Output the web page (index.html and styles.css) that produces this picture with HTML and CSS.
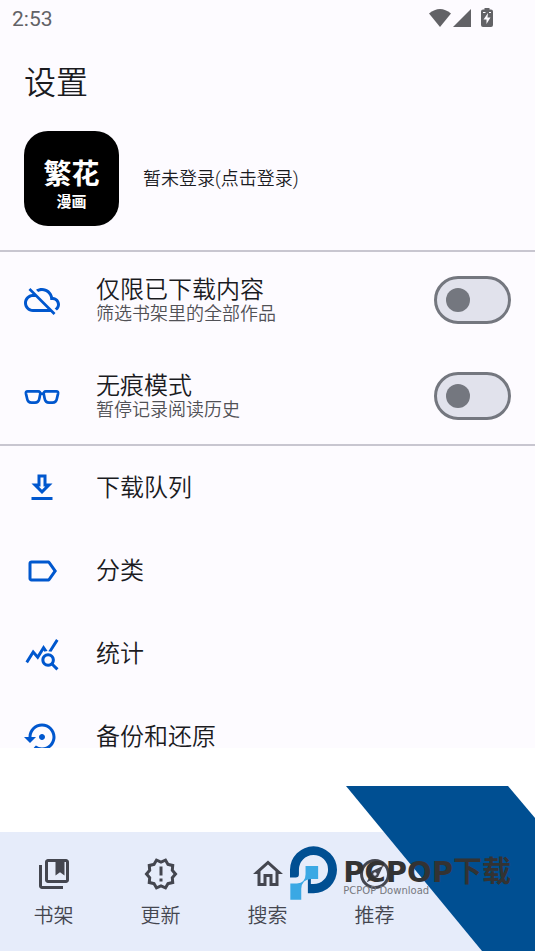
FILE: index.html
```html
<!DOCTYPE html>
<html lang="zh-CN">
<head>
  <meta charset="UTF-8">
  <meta name="viewport" content="width=device-width, initial-scale=1.0">
  <title>设置</title>
  <link rel="stylesheet" href="styles.css">
</head>
<body>
  <!-- Scrolling content -->
  <main class="content">
    <div class="status-bar">
      <span class="clock">2:53</span>
      <svg class="status-icons" width="68" height="22" viewBox="0 0 68 22">
        <path d="M0 5.500Q11 -3.500 22 5.500L11 19z"/>
        <path d="M42 1v18H24z"/>
        <path fill-rule="evenodd" d="M55.500 0h5v1.500H62q2 0 2 2v13.500q0 2-2 2h-8q-2 0-2-2V3.500q0-2 2-2h1.500zM59 5l-4.500 6.500h3V16l4-6.500h-3zM54 4v1h2.500V4zM60 4v1h2V4z"/>
      </svg>
    </div>

    <h1>设置</h1>

    <a class="account" href="#login">
      <span class="avatar">
        <span class="avatar-name">繁花</span>
        <span class="avatar-type">漫画</span>
      </span>
      <span class="account-text">暂未登录(点击登录)</span>
    </a>

    <!-- Switches -->
    <section class="switches">
      <div class="switch-row">
        <svg class="icon" viewBox="0 0 24 24"><path d="M19.350 10.040C18.670 6.590 15.640 4 12 4c-1.480 0-2.850.43-4.010 1.170l1.460 1.460C10.210 6.230 11.080 6 12 6c3.040 0 5.500 2.460 5.500 5.500v.5H19c1.660 0 3 1.340 3 3 0 1.130-.64 2.110-1.560 2.620l1.450 1.450C23.160 18.160 24 16.680 24 15c0-2.640-2.050-4.780-4.650-4.960zM3 5.270l2.750 2.740C2.560 8.150 0 10.770 0 14c0 3.310 2.690 6 6 6h11.730l2 2L21 20.730 4.270 4 3 5.270zM7.730 10l8 8H6c-2.210 0-4-1.790-4-4s1.790-4 4-4h1.730z"/></svg>
        <label class="switch-text" for="downloadedOnly">
          <span class="title">仅限已下载内容</span>
          <span class="subtitle">筛选书架里的全部作品</span>
        </label>
        <input class="switch" type="checkbox" id="downloadedOnly">
      </div>
      <div class="switch-row">
        <svg class="icon" viewBox="0 0 24 24">
          <g fill="none" stroke="#0057ce" stroke-width="1.8">
            <path d="M2.500 8.900h6.900c1.200 0 1.600.8 1.400 1.900l-.6 3c-.3 1.700-1.200 2.600-2.900 2.600H5c-1.800 0-2.600-.9-2.900-2.600L1.300 10.400c-.2-1 .2-1.500 1.200-1.500z"/>
            <path d="M21.500 8.900h-6.900c-1.200 0-1.600.8-1.400 1.900l.6 3c.3 1.700 1.200 2.600 2.900 2.600H19c1.800 0 2.600-.9 2.900-2.600l.8-3.400c.2-1-.2-1.500-1.200-1.500z"/>
            <path d="M10.500 10.500h3"/>
          </g>
        </svg>
        <label class="switch-text" for="incognito">
          <span class="title">无痕模式</span>
          <span class="subtitle">暂停记录阅读历史</span>
        </label>
        <input class="switch" type="checkbox" id="incognito">
      </div>
    </section>

    <!-- Menu -->
    <div class="menu">
      <a class="menu-item" href="#queue">
        <svg class="icon" viewBox="0 0 24 24"><path d="M19 9h-4V3H9v6H5l7 7 7-7zm-8 2V5h2v6h1.170L12 13.170 9.830 11H11zm-6 7h14v2H5z"/></svg>
        <span class="title">下载队列</span>
      </a>
      <a class="menu-item" href="#categories">
        <svg class="icon" viewBox="0 0 24 24"><path d="M17.630 5.840C17.270 5.330 16.670 5 16 5L5 5.010C3.900 5.010 3 5.900 3 7v10c0 1.100.9 1.990 2 1.990L16 19c.67 0 1.270-.33 1.630-.84L22 12l-4.370-6.160zM16 17H5V7h11l3.550 5L16 17z"/></svg>
        <span class="title">分类</span>
      </a>
      <a class="menu-item" href="#stats">
        <svg class="icon" viewBox="0 0 24 24"><path d="M19.880 18.470c.44-.7.7-1.510.7-2.390 0-2.490-2.010-4.500-4.500-4.500s-4.500 2.010-4.500 4.500 2.010 4.500 4.490 4.500c.88 0 1.700-.26 2.390-.7L21.580 23 23 21.580l-3.120-3.110zm-3.800.11c-1.380 0-2.500-1.120-2.500-2.500s1.120-2.500 2.500-2.500 2.500 1.120 2.500 2.500-1.120 2.500-2.500 2.500zm-.36-8.500c-.74.02-1.450.18-2.100.45l-.55-.83-3.800 6.180-3.010-3.520-3.630 5.810L1 17l5-8 3 3.500L13 6l2.720 4.080zm2.590.5c-.64-.28-1.330-.45-2.050-.49L21.380 2 23 3.180l-4.690 7.400z"/></svg>
        <span class="title">统计</span>
      </a>
      <a class="menu-item" href="#backup">
        <svg class="icon" viewBox="0 0 24 24"><path d="M14 12c0-1.100-.9-2-2-2s-2 .9-2 2 .9 2 2 2 2-.9 2-2zm-2-9c-4.970 0-9 4.030-9 9H0l4 4 4-4H5c0-3.870 3.130-7 7-7s7 3.130 7 7-3.130 7-7 7c-1.510 0-2.910-.49-4.060-1.300l-1.420 1.440C8.040 20.300 9.940 21 12 21c4.970 0 9-4.030 9-9s-4.030-9-9-9z"/></svg>
        <span class="title">备份和还原</span>
      </a>
    </div>
  </main>

  <!-- Bottom navigation -->
  <nav class="bottom-nav">
    <a class="nav-item" href="#library">
      <svg class="icon" viewBox="0 0 24 24"><path d="M4 6H2v14c0 1.100.9 2 2 2h14v-2H4zM20 2H8c-1.100 0-2 .9-2 2v12c0 1.100.9 2 2 2h12c1.100 0 2-.9 2-2V4c0-1.100-.9-2-2-2zm0 14H8V4h5v9l3-2.200 3 2.200V4h1z"/></svg>
      <span>书架</span>
    </a>
    <a class="nav-item" href="#updates">
      <svg class="icon" viewBox="0 0 24 24"><path d="M23 12l-2.440-2.780.34-3.680-3.610-.82-1.890-3.180L12 3 8.600 1.540 6.710 4.720l-3.610.81.34 3.680L1 12l2.440 2.780-.34 3.690 3.610.82 1.890 3.180L12 21l3.400 1.460 1.890-3.180 3.610-.82-.34-3.680L23 12zm-4.510 2.110.26 2.790-2.740.62-1.430 2.410L12 18.820l-2.580 1.110-1.430-2.410-2.740-.62.26-2.800L3.660 12l1.850-2.120-.26-2.780 2.740-.61 1.430-2.410L12 5.180l2.580-1.110 1.430 2.410 2.740.62-.26 2.790L20.340 12l-1.850 2.110zM11 15h2v2h-2zm0-8h2v6h-2z"/></svg>
      <span>更新</span>
    </a>
    <a class="nav-item" href="#search">
      <svg class="icon" viewBox="0 0 24 24"><path d="M12 5.690l5 4.500V18h-2v-6H9v6H7v-7.810l5-4.500M12 3L2 12h3v8h6v-6h2v6h6v-8h3L12 3z"/></svg>
      <span>搜索</span>
    </a>
    <a class="nav-item" href="#discover">
      <svg class="icon" viewBox="0 0 24 24"><path d="M12 2C6.480 2 2 6.480 2 12s4.480 10 10 10 10-4.480 10-10S17.520 2 12 2zm0 18c-4.410 0-8-3.590-8-8s3.590-8 8-8 8 3.590 8 8-3.590 8-8 8zm-5.500-2.500l7.510-3.490L17.500 6.500 9.990 9.990 6.500 17.500zm5.500-6.600c.61 0 1.100.49 1.100 1.100s-.49 1.100-1.100 1.100-1.100-.49-1.100-1.100.49-1.100 1.100-1.100z"/></svg>
      <span>推荐</span>
    </a>
  </nav>

  <!-- Corner ribbon and site mark -->
  <div class="ribbon"></div>
  <div class="site-mark">
    <svg width="47" height="54" viewBox="0 0 142 161">
      <path fill="#004f92" d="M0 94V71A71 71 0 1 1 71 142H54V99h9V114h8A44 44 0 1 0 27 71V84Q27 94 17 94z"/>
      <path fill="#3aa8e4" d="M47 59h38v40H64Q36 100 34 128V161H1V112h20Q47 110 47 84z"/>
    </svg>
    <div class="site-text">
      <div class="site-name">PCPOP下载</div>
      <div class="site-sub">PCPOP Download</div>
    </div>
  </div>
</body>
</html>
```

FILE: styles.css
```css
* {
  box-sizing: border-box;
}

body {
  margin: 0;
  height: 100vh;
  display: flex;
  flex-direction: column;
  gap: 84px;
  position: relative;
  overflow: hidden;
  background: #fff;
  color: #1b1b1f;
  font-family: Roboto, 'Noto Sans CJK SC', sans-serif;
  font-weight: 350;
}

a {
  color: inherit;
  text-decoration: none;
}

.content {
  flex: 1;
  min-height: 0;
  overflow: hidden;
  background: #fdfbff;
}

/* Status bar */
.status-bar {
  display: flex;
  justify-content: space-between;
  align-items: center;
  height: 38px;
  padding: 0 38px 0 12px;
  color: #626266;
}

.clock {
  font-size: 21px;
  font-weight: 400;
}

.status-icons {
  fill: #626266;
}

h1 {
  margin: 0;
  padding: 21px 24px 24px;
  font-size: 32px;
  line-height: 48px;
  font-weight: 350;
}

/* Account */
.account {
  display: flex;
  align-items: center;
  gap: 24px;
  padding: 0 24px 24px;
  border-bottom: 2px solid #c8c6d0;
}

.avatar {
  display: flex;
  flex-direction: column;
  align-items: center;
  justify-content: center;
  width: 95px;
  height: 95px;
  padding-top: 16px;
  border-radius: 24px;
  background: #000;
  color: #fff;
  font-weight: 700;
}

.avatar-name {
  font-size: 28px;
  line-height: 30px;
}

.avatar-type {
  font-size: 15px;
  line-height: 24px;
}

.account-text {
  font-size: 18px;
  line-height: 24px;
}

/* Rows */
.icon {
  flex: none;
  width: 36px;
  height: 36px;
  fill: #0057ce;
}

.switches {
  border-bottom: 2px solid #c8c6d0;
}

.switch-row,
.menu-item {
  display: flex;
  align-items: center;
  gap: 36px;
  height: 96px;
  padding: 0 24px;
}

.menu-item {
  height: 83px;
}

.switch-text {
  flex: 1;
  display: flex;
  flex-direction: column;
  padding-top: 4px;
}

.title {
  font-size: 24px;
  line-height: 24px;
}

.subtitle {
  font-size: 18px;
  line-height: 24px;
  color: #515156;
}

.switch {
  appearance: none;
  display: flex;
  align-items: center;
  width: 77px;
  height: 48px;
  margin: 0;
  padding: 0 9px;
  border: 3px solid #74777f;
  border-radius: 24px;
  background: #e1e2ec;
}

.switch::before {
  content: '';
  width: 24px;
  height: 24px;
  border-radius: 50%;
  background: #74777f;
}

.switch:checked {
  justify-content: flex-end;
}

/* Bottom navigation */
.bottom-nav {
  display: grid;
  grid-template-columns: repeat(5, 1fr);
  height: 119px;
  padding-top: 24px;
  background: #e6ecfa;
  color: #44464f;
}

.nav-item {
  display: flex;
  flex-direction: column;
  align-items: center;
  gap: 8px;
  font-size: 20px;
  line-height: 32px;
}

.nav-item .icon {
  fill: #44464f;
}

/* Ribbon and mark lie over the navigation */
.ribbon {
  position: absolute;
  right: 0;
  bottom: 0;
  width: 189px;
  height: 165px;
  background: #004f92;
  clip-path: polygon(0 0, 162px 0, 100% 32px, 100% 100%, 136px 100%);
}

.site-mark {
  position: absolute;
  right: 24px;
  bottom: 51px;
  display: flex;
  align-items: flex-end;
  gap: 6px;
  color: #333;
  pointer-events: none;
}

.site-text {
  padding-bottom: 3px;
}

.site-name {
  font-family: 'DejaVu Sans', 'Noto Sans CJK SC', sans-serif;
  font-size: 29px;
  line-height: 26px;
  font-weight: 700;
}

.site-sub {
  font-family: 'DejaVu Sans', sans-serif;
  font-size: 10px;
  line-height: 12px;
  font-weight: 400;
  color: #77797f;
}
```
